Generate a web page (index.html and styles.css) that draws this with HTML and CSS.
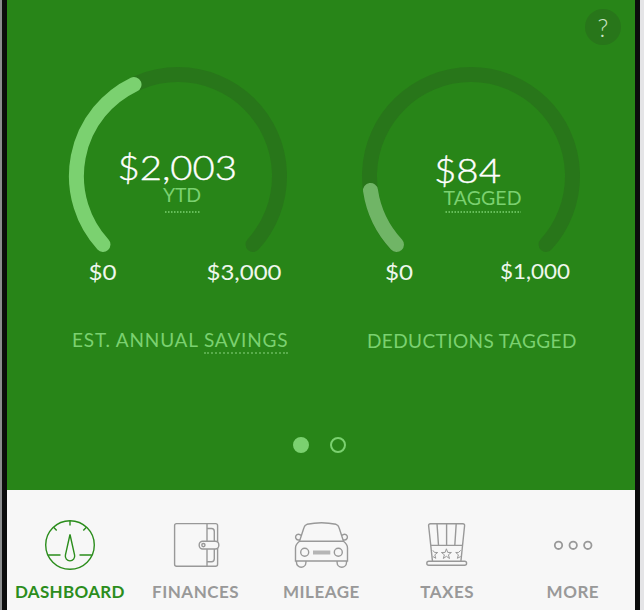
FILE: index.html
```html
<!DOCTYPE html>
<html lang="en">
<head>
<meta charset="UTF-8">
<meta name="viewport" content="width=device-width, initial-scale=1.0">
<title>Dashboard</title>
<link rel="stylesheet" href="styles.css">
</head>
<body>

<div class="phone">
  <main class="summary">
    <button class="help">?</button>

    <div class="gauges">
      <!-- Savings gauge -->
      <svg class="gauge" viewBox="0 0 220 220">
        <path class="track" d="M35 178.5A101.5 101.5 0 1 1 185 178.5"/>
        <path class="fill" d="M35 178.5A101.5 101.5 0 0 1 66 18.5"/>
        <text class="amount" x="49.5" y="113.5" textLength="119.5" lengthAdjust="spacingAndGlyphs">$2,003</text>
        <text class="unit" x="95" y="136.3" textLength="38">YTD</text>
        <path class="dots" d="M97 146H133"/>
        <text class="scale" x="20.5" y="213.5" textLength="28" lengthAdjust="spacingAndGlyphs">$0</text>
        <text class="scale" x="138.5" y="213.5" textLength="75" lengthAdjust="spacingAndGlyphs">$3,000</text>
      </svg>

      <!-- Deductions gauge -->
      <svg class="gauge" viewBox="0 0 220 220">
        <path class="track" d="M35 178.5A101.5 101.5 0 1 1 185 178.5"/>
        <path class="fill muted" d="M35.5 178.5A101.5 101.5 0 0 1 9.5 124.5"/>
        <text class="amount" x="73" y="117.3" textLength="67" lengthAdjust="spacingAndGlyphs">$84</text>
        <text class="unit" x="82.5" y="139.3" textLength="78">TAGGED</text>
        <path class="dots" d="M84.5 146H160"/>
        <text class="scale" x="24" y="213.5" textLength="28" lengthAdjust="spacingAndGlyphs">$0</text>
        <text class="scale" x="139" y="212.5" textLength="70" lengthAdjust="spacingAndGlyphs">$1,000</text>
      </svg>
    </div>

    <div class="captions">
      <div class="caption savings">EST. ANNUAL <span class="term">SAVINGS</span></div>
      <div class="caption deductions">DEDUCTIONS TAGGED</div>
    </div>

    <div class="pager">
      <span class="page current"></span>
      <span class="page"></span>
    </div>
  </main>

  <nav class="tabs">
    <a class="tab active">
      <svg class="icon" viewBox="0 0 60 60">
        <circle cx="30" cy="30" r="24.3"/>
        <path d="M30 6V10.5M13.6 12.2L16.7 15.5M46.4 12.2L43.3 15.5M8.2 40H20.5M39.5 40H51.8"/>
        <path d="M30 19.5L25.4 40.2A4.7 4.7 0 1 0 34.6 40.2Z"/>
      </svg>
      <span class="label dashboard">DASHBOARD</span>
    </a>
    <a class="tab">
      <svg class="icon" viewBox="0 0 60 60">
        <rect x="8.6" y="8.6" width="43" height="42.7" rx="2"/>
        <path d="M41 8.6V51.3M41 13.5H45.5Q48.3 13.5 48.3 16.5V43.7Q48.3 46.7 45.5 46.7H41"/>
        <rect class="strap" x="33.2" y="26.2" width="19.6" height="7.8" rx="3.5"/>
        <circle cx="37.4" cy="30.1" r="1.6"/>
      </svg>
      <span class="label">FINANCES</span>
    </a>
    <a class="tab">
      <svg class="icon" viewBox="0 0 60 60">
        <path d="M8.5 26.3L13 12.5Q13.7 10 16 9.3Q30.5 6.2 45 9.3Q47.3 10 48 12.5L52.5 26.3"/>
        <path d="M8.5 26.3H52.5Q56.5 29.5 56.5 33V46H4.5V33Q4.5 29.5 8.5 26.3Z"/>
        <path d="M9 25H7.2A2.9 2.9 0 1 1 9.9 20.5M52 25H53.8A2.9 2.9 0 1 0 51.1 20.5"/>
        <circle cx="13.7" cy="37.3" r="4"/>
        <circle cx="47.3" cy="37.3" r="4"/>
        <rect class="grille" x="22" y="35.5" width="17.3" height="4"/>
        <path d="M5.5 46V47.5A4.7 4.7 0 0 0 14.9 47.5V46M46.1 46V47.5A4.7 4.7 0 0 0 55.5 47.5V46"/>
      </svg>
      <span class="label">MILEAGE</span>
    </a>
    <a class="tab">
      <svg class="icon" viewBox="0 0 60 60">
        <path d="M15.5 46.3L11.6 10.5Q11.6 8.7 13.5 8.7H45.8Q47.7 8.7 47.6 10.5L43.9 46.3"/>
        <rect x="9.8" y="46.3" width="39.8" height="4" rx="2"/>
        <path d="M14 30.4H45.5M20 8.7L21.5 30.4M29.6 8.7V30.4M39.2 8.7L37.8 30.4"/>
        <path class="star" d="M29.4 33.8L30.7 37.4L34.4 37.5L31.4 39.8L32.5 43.5L29.4 41.3L26.3 43.5L27.4 39.8L24.4 37.5L28.1 37.4Z"/>
        <path class="star" d="M15.8 35.3L17.5 37.4L20.7 37.5L17.8 39.8L18.8 43.3L15.8 41.5M43.7 35.3L41.7 37.4L38.7 37.5L41.4 39.8L40.4 43.3L43.7 41.5"/>
      </svg>
      <span class="label">TAXES</span>
    </a>
    <a class="tab">
      <svg class="icon more-dots" viewBox="0 0 60 60">
        <circle cx="15.5" cy="30.3" r="3.7"/>
        <circle cx="30.2" cy="30.3" r="3.7"/>
        <circle cx="44.8" cy="30.3" r="3.7"/>
      </svg>
      <span class="label">MORE</span>
    </a>
  </nav>
</div>

</body>
</html>
```
FILE: styles.css
```css
* {
  box-sizing: border-box;
}
body {
  margin: 0;
  background: #e4e4e6;
  font-family: Lato, "Open Sans", sans-serif;
  overflow: hidden;
}
.phone {
  width: 640px;
  height: 610px;
  border-left: 2px solid #8b8d8e;
  padding: 0 5px;
  background: #0b0c0c;
}
.summary {
  position: relative;
  height: 490px;
  padding-top: 66px;
  background: #288518;
}
.help {
  position: absolute;
  top: 9px;
  right: 14px;
  width: 36px;
  height: 36px;
  padding: 0;
  border: 0;
  border-radius: 50%;
  background: #28761a;
  color: #c9e3c4;
  font: 300 25px/36px Lato, sans-serif;
}
.gauges {
  display: flex;
  gap: 73px;
  padding-left: 61px;
}
.gauge {
  width: 220px;
  height: 220px;
}
.track, .fill {
  fill: none;
  stroke: #28761a;
  stroke-width: 15;
  stroke-linecap: round;
}
.fill {
  stroke: #7bd170;
}
.fill.muted {
  stroke: #70b566;
}
.amount {
  fill: #fff;
  stroke: #fff;
  stroke-width: 0.35;
  font-size: 33px;
  font-weight: 300;
}
.unit {
  fill: #7bd170;
  font-size: 19.5px;
}
.scale {
  fill: #eef7ec;
  font-size: 20.5px;
}
.dots {
  stroke: #7bd170;
  stroke-width: 1.5;
  stroke-dasharray: 1.5 1.5;
}
.captions {
  display: flex;
  height: 60px;
  padding: 42px 0 0 65px;
  color: #7bd170;
  font-size: 19px;
  line-height: 24px;
  white-space: nowrap;
}
.caption {
  flex: none;
  width: 295px;
}
.savings {
  letter-spacing: 0.8px;
}
.term {
  display: inline-block;
  border-bottom: 2px dotted #58ac4b;
}
.deductions {
  padding-top: 1px;
  letter-spacing: 0.4px;
}
.pager {
  display: flex;
  gap: 21px;
  padding: 91px 0 0 286px;
}
.page {
  width: 16px;
  height: 16px;
  border: 2px solid #7bd170;
  border-radius: 50%;
}
.page.current {
  background: #7bd170;
}
.tabs {
  display: flex;
  height: 120px;
  background: #f7f7f7;
}
.tab {
  display: flex;
  flex: none;
  flex-direction: column;
  align-items: center;
  width: 125.75px;
  padding-top: 25px;
  color: #999;
}
.tab.active {
  color: #2b8d1c;
}
.icon {
  width: 60px;
  height: 60px;
  fill: none;
  stroke: currentColor;
  stroke-width: 1.4;
}
.strap {
  fill: #f7f7f7;
}
.grille {
  fill: #b5b5b5;
  stroke: none;
}
.star {
  stroke-width: 1;
}
.more-dots {
  stroke-width: 1.8;
}
.label {
  margin-top: 6px;
  font-size: 17px;
  font-weight: 700;
  line-height: 22px;
  letter-spacing: 0.5px;
}
.label.dashboard {
  letter-spacing: 0.3px;
}
```
